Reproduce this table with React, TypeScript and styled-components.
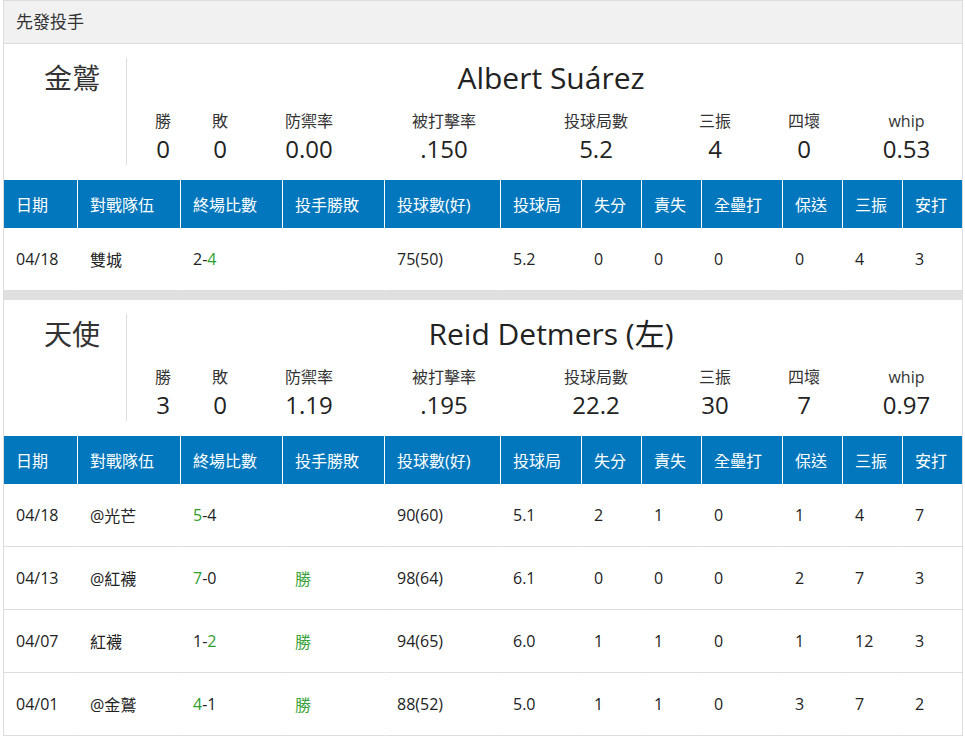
import React from 'react';
import styled, { createGlobalStyle } from 'styled-components';

const GlobalStyle = createGlobalStyle`
	body {
		margin: 0;
		background: #fff;
		font-family: 'Open Sans', 'Noto Sans CJK TC', sans-serif;
		color: #333;
	}
`;

const Panel = styled.div`
	width: 960px;
	margin-left: 3px;
	box-sizing: border-box;
	border: 1px solid #ddd;
	border-bottom: 0;
`;

const PanelTitle = styled.div`
	height: 42px;
	line-height: 42px;
	padding: 0 12px;
	background: #f1f1f1;
	border-bottom: 1px solid #ddd;
	font-size: 17px;
	color: #333;
`;

const Separator = styled.div`
	height: 9px;
	background: #e0e0e0;
`;

const PitcherBlock = styled.div`
	display: flex;
	height: 136px;
	box-sizing: border-box;
	padding: 14px 0 15px;
`;

const TeamName = styled.div`
	width: 122px;
	box-sizing: border-box;
	padding-right: 26px;
	text-align: right;
	font-size: 28px;
	line-height: 40px;
	color: #333;
`;

const PitcherInfo = styled.div`
	flex: 1;
	border-left: 1px solid #ddd;
`;

const PitcherName = styled.div`
	padding-left: 13px;
	text-align: center;
	font-size: 30px;
	line-height: 40px;
	color: #222;
`;

const StatGrid = styled.div`
	display: grid;
	grid-template-columns: 56px 58px 120px 150px 154px 84px 94px 111px;
	margin: 11px 0 0 8px;
	text-align: center;
`;

const StatLabel = styled.div`
	font-size: 16px;
	line-height: 24px;
	color: #333;
`;

const StatValue = styled.div`
	font-size: 24px;
	line-height: 32px;
	color: #222;
`;

const Table = styled.table`
	width: 100%;
	table-layout: fixed;
	border-collapse: separate;
	border-spacing: 0;
`;

const Col = styled.col<{ $w: number }>`
	width: ${({ $w }) => $w}px;
`;

const Th = styled.th`
	height: 48px;
	padding: 0 12px;
	background: #0277bd;
	color: #fff;
	font-size: 16px;
	font-weight: normal;
	text-align: left;
	white-space: nowrap;
	border-left: 1px solid #fff;

	&:first-child {
		border-left: 0;
		padding-left: 12px;
	}
`;

const Td = styled.td`
	height: 62px;
	padding: 0 12px;
	font-size: 16px;
	color: #222;
	border-left: 1px solid transparent;
	border-bottom: 1px solid #ddd;
	white-space: nowrap;

	&:first-child {
		border-left: 0;
	}
`;

const Win = styled.span`
	color: #2e9e2e;
`;

const Result = styled.span`
	color: #3aa33a;
`;

const colWidths = [73, 103, 102, 102, 116, 81, 60, 60, 81, 60, 60, 60];
const headers = ['日期', '對戰隊伍', '終場比數', '投手勝敗', '投球數(好)', '投球局', '失分', '責失', '全壘打', '保送', '三振', '安打'];
const statLabels = ['勝', '敗', '防禦率', '被打擊率', '投球局數', '三振', '四壞', 'whip'];

type Game = {
	date: string;
	opp: string;
	score: [string, string];
	win: 0 | 1;
	result: string;
	pitches: string;
	rest: string[];
};

type Starter = {
	team: string;
	name: string;
	stats: string[];
	games: Game[];
};

const starters: Starter[] = [
	{
		team: '金鷲',
		name: 'Albert Suárez',
		stats: ['0', '0', '0.00', '.150', '5.2', '4', '0', '0.53'],
		games: [
			{ date: '04/18', opp: '雙城', score: ['2', '4'], win: 1, result: '', pitches: '75(50)', rest: ['5.2', '0', '0', '0', '0', '4', '3'] },
		],
	},
	{
		team: '天使',
		name: 'Reid Detmers (左)',
		stats: ['3', '0', '1.19', '.195', '22.2', '30', '7', '0.97'],
		games: [
			{ date: '04/18', opp: '@光芒', score: ['5', '4'], win: 0, result: '', pitches: '90(60)', rest: ['5.1', '2', '1', '0', '1', '4', '7'] },
			{ date: '04/13', opp: '@紅襪', score: ['7', '0'], win: 0, result: '勝', pitches: '98(64)', rest: ['6.1', '0', '0', '0', '2', '7', '3'] },
			{ date: '04/07', opp: '紅襪', score: ['1', '2'], win: 1, result: '勝', pitches: '94(65)', rest: ['6.0', '1', '1', '0', '1', '12', '3'] },
			{ date: '04/01', opp: '@金鷲', score: ['4', '1'], win: 0, result: '勝', pitches: '88(52)', rest: ['5.0', '1', '1', '0', '3', '7', '2'] },
		],
	},
];

const Score: React.FC<{ score: [string, string]; win: 0 | 1 }> = ({ score, win }) => (
	<>
		{win === 0 ? <Win>{score[0]}</Win> : score[0]}-{win === 1 ? <Win>{score[1]}</Win> : score[1]}
	</>
);

const StarterSection: React.FC<{ starter: Starter }> = ({ starter }) => (
	<>
		<PitcherBlock>
			<TeamName>{starter.team}</TeamName>
			<PitcherInfo>
				<PitcherName>{starter.name}</PitcherName>
				<StatGrid>
					{statLabels.map((label) => (
						<StatLabel key={label}>{label}</StatLabel>
					))}
					{starter.stats.map((value, index) => (
						<StatValue key={index}>{value}</StatValue>
					))}
				</StatGrid>
			</PitcherInfo>
		</PitcherBlock>
		<Table>
			<colgroup>
				{colWidths.map((w, index) => (
					<Col key={index} $w={w} />
				))}
			</colgroup>
			<thead>
				<tr>
					{headers.map((h) => (
						<Th key={h}>{h}</Th>
					))}
				</tr>
			</thead>
			<tbody>
				{starter.games.map((game) => (
					<tr key={game.date}>
						<Td>{game.date}</Td>
						<Td>{game.opp}</Td>
						<Td>
							<Score score={game.score} win={game.win} />
						</Td>
						<Td>
							<Result>{game.result}</Result>
						</Td>
						<Td>{game.pitches}</Td>
						{game.rest.map((value, index) => (
							<Td key={index}>{value}</Td>
						))}
					</tr>
				))}
			</tbody>
		</Table>
	</>
);

const App: React.FC = () => (
	<>
		<GlobalStyle />
		<Panel>
			<PanelTitle>先發投手</PanelTitle>
			<StarterSection starter={starters[0]} />
			<Separator />
			<StarterSection starter={starters[1]} />
		</Panel>
	</>
);

export default App;
